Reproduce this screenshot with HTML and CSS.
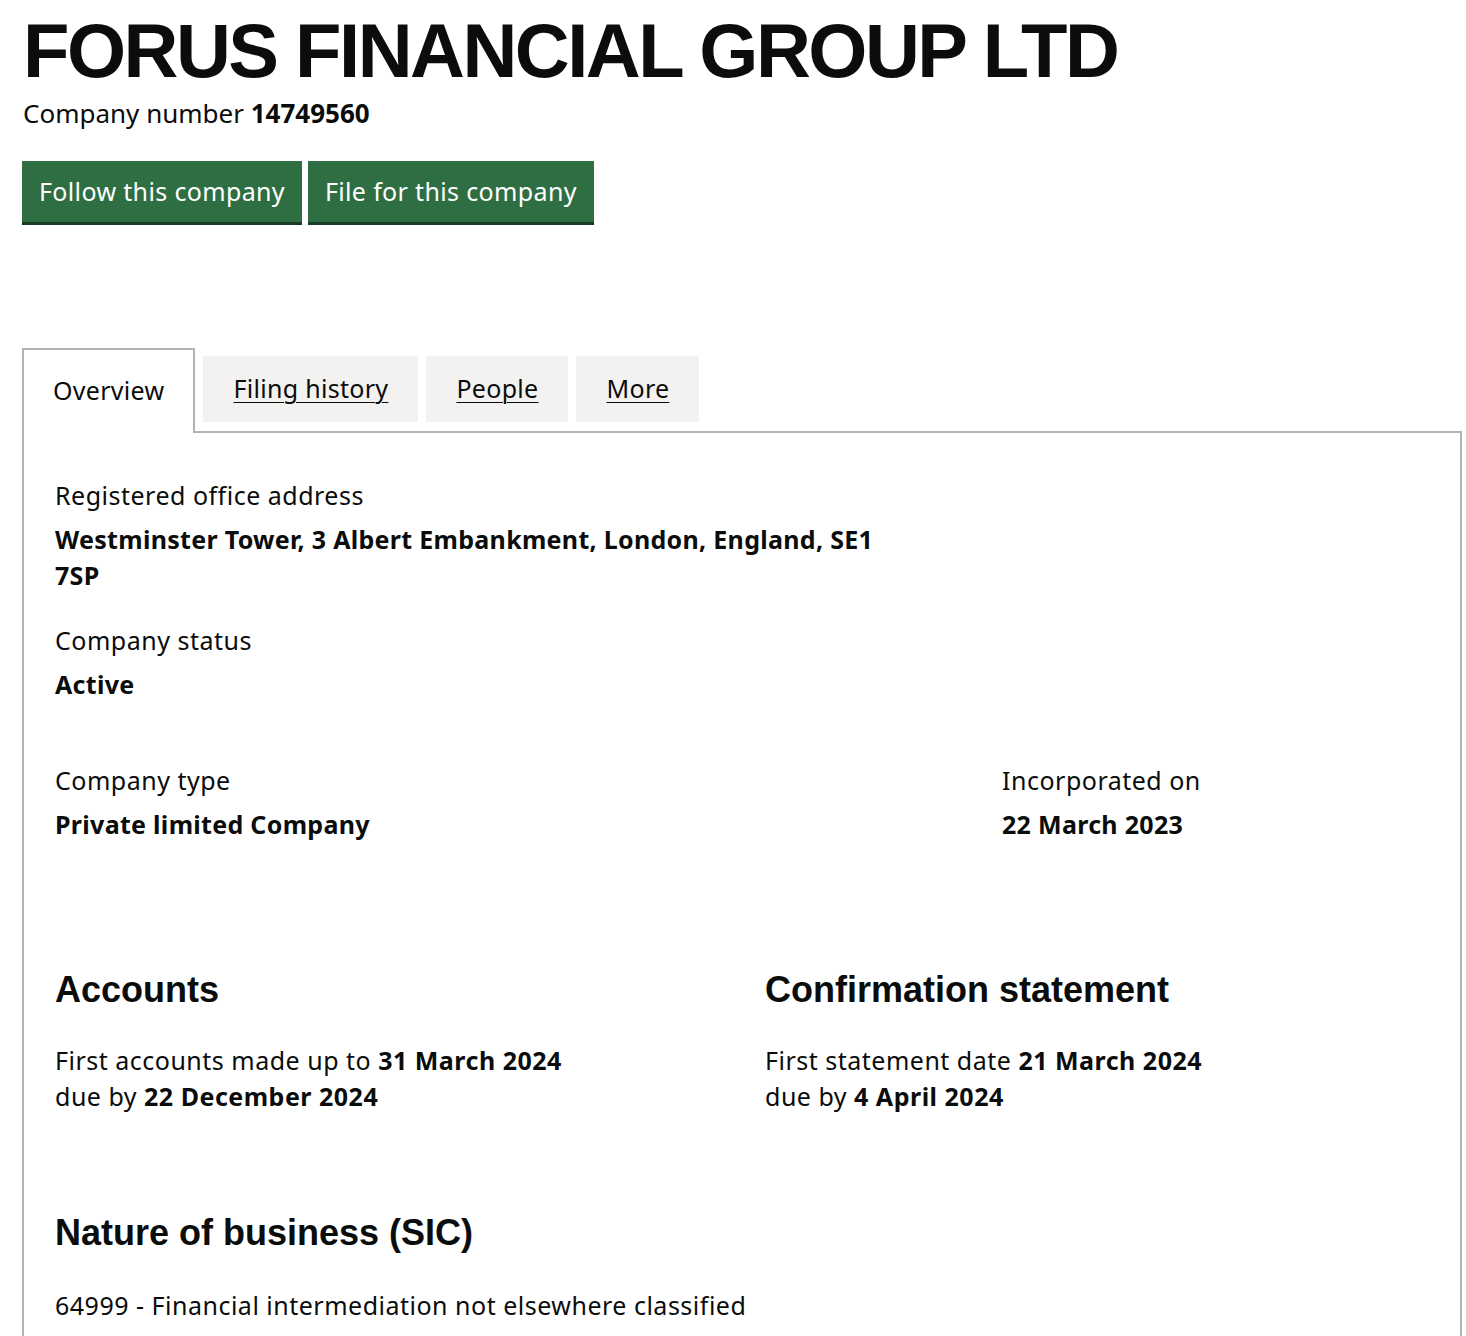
FILE: index.html
```html
<!DOCTYPE html>
<html lang="en">
<head>
    <meta charset="UTF-8">
    <title>FORUS FINANCIAL GROUP LTD overview</title>
    <link rel="stylesheet" href="styles.css">
</head>
<body>
    <div class="page">
        <h1 class="company-name">FORUS FINANCIAL GROUP LTD</h1>
        <p class="company-number">Company number <strong>14749560</strong></p>

        <div class="actions">
            <a class="button" href="#">Follow this company</a>
            <a class="button" href="#">File for this company</a>
        </div>

        <ul class="tabs">
            <li class="tab tab-active">Overview</li>
            <li class="tab"><a href="#">Filing history</a></li>
            <li class="tab"><a href="#">People</a></li>
            <li class="tab"><a href="#">More</a></li>
        </ul>

        <div class="panel">
            <dl class="field field-address">
                <dt>Registered office address</dt>
                <dd>Westminster Tower, 3 Albert Embankment, London, England, SE1 7SP</dd>
            </dl>

            <dl class="field">
                <dt>Company status</dt>
                <dd>Active</dd>
            </dl>

            <div class="field-row">
                <dl class="field">
                    <dt>Company type</dt>
                    <dd>Private limited Company</dd>
                </dl>
                <dl class="field">
                    <dt>Incorporated on</dt>
                    <dd>22 March 2023</dd>
                </dl>
            </div>

            <div class="columns">
                <div class="column">
                    <h2>Accounts</h2>
                    <p>First accounts made up to <strong>31 March 2024</strong><br>
                    due by <strong>22 December 2024</strong></p>
                </div>
                <div class="column">
                    <h2>Confirmation statement</h2>
                    <p>First statement date <strong>21 March 2024</strong><br>
                    due by <strong>4 April 2024</strong></p>
                </div>
            </div>

            <h2>Nature of business (SIC)</h2>
            <p class="sic">64999 - Financial intermediation not elsewhere classified</p>
        </div>
    </div>
</body>
</html>
```

FILE: styles.css
```css
body {
    margin: 0;
    font-family: 'Noto Sans', sans-serif;
    color: #0b0c0c;
    background: #fff;
}
.page {
    padding: 0 4px 0 22px;
}
.company-name {
    font-family: 'Liberation Sans', Arial, sans-serif;
    font-weight: 700;
    font-size: 76px;
    letter-spacing: -2.5px;
    line-height: 1;
    margin: 13px 0 0 1px;
}
.company-number {
    font-size: 26px;
    margin: 6px 0 0 1px;
}
.company-number strong {
    font-weight: 700;
}
.actions {
    display: flex;
    gap: 6px;
    margin-top: 30px;
}
.button {
    display: block;
    background-color: #2f6e42;
    color: #fff;
    text-decoration: none;
    font-size: 25px;
    letter-spacing: 0.35px;
    line-height: 30px;
    padding: 15px 17px 16px;
    box-shadow: 0 3px 0 #1b3d26;
}
.tabs {
    list-style: none;
    display: flex;
    align-items: flex-start;
    gap: 8px;
    margin: 126px 0 0;
    padding: 0;
}
.tab {
    background: #f3f2f1;
    font-size: 25px;
    letter-spacing: 0.3px;
    line-height: 30px;
    padding: 17px 30px 19px;
    margin-top: 8px;
}
.tab a {
    color: #0b0c0c;
    text-decoration: underline;
    text-underline-offset: 4px;
    text-decoration-thickness: 1px;
}
.tab-active {
    background: #fff;
    border: 2px solid #b1b4b6;
    border-bottom: 0;
    margin-top: 0;
    margin-bottom: -2px;
    padding: 25px 29px 28px;
    position: relative;
}
.panel {
    border: 2px solid #b1b4b6;
    padding: 46px 31px 20px;
    font-size: 25px;
    letter-spacing: 0.5px;
}
.field {
    margin: 0 0 31px;
}
.field dt {
    line-height: 32px;
}
.field dd {
    margin: 10px 0 0;
    line-height: 36px;
    font-weight: 700;
    letter-spacing: 0.3px;
}
.field-address dd {
    max-width: 830px;
}
.field-row {
    display: flex;
    margin-top: 62px;
}
.field-row .field:first-child {
    width: 947px;
}
.columns {
    display: flex;
    margin-top: 97px;
}
.column {
    width: 710px;
    flex-shrink: 0;
}
.column + .column {
    width: auto;
    flex: 1;
}
h2 {
    font-family: 'Liberation Sans', Arial, sans-serif;
    font-weight: 700;
    font-size: 36px;
    letter-spacing: 0;
    line-height: 40px;
    margin: 0;
}
.column p,
.sic {
    line-height: 36px;
    margin: 32px 0 0;
}
.columns + h2 {
    margin-top: 99px;
}
.sic {
    margin-top: 34px;
}
```
